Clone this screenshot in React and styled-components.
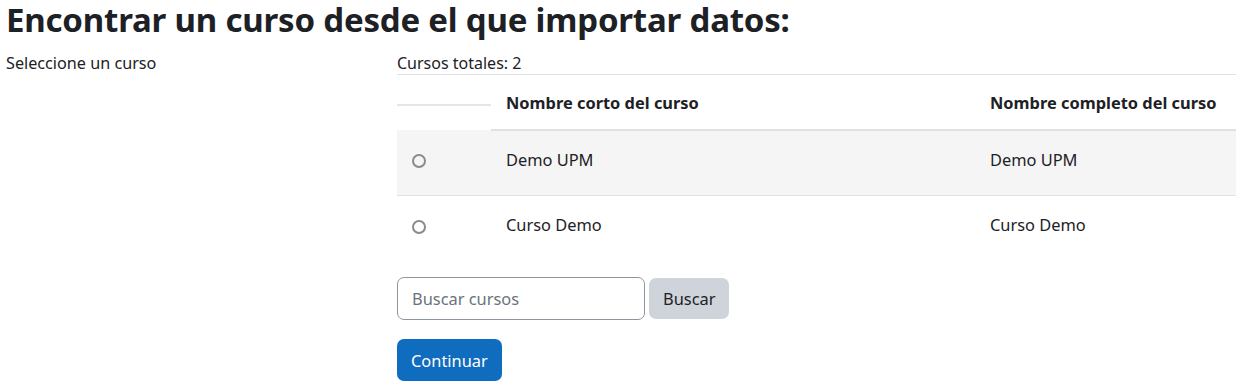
import React from 'react';
import styled, { createGlobalStyle } from 'styled-components';

const GlobalStyle = createGlobalStyle`
  body {
    margin: 0;
    background: #fff;
    color: #1d2125;
    font-family: "Noto Sans", "Open Sans", sans-serif;
    font-size: 16.4px;
  }
`;

const Page = styled.div`
  padding: 0 0 0 6px;
`;

const Heading = styled.h2`
  margin: 0 0 13px;
  font-size: 33px;
  font-weight: 700;
  line-height: 39px;
  letter-spacing: -0.2px;
`;

const FormRow = styled.div`
  display: grid;
  grid-template-columns: 391px 1fr;
`;

const Label = styled.div`
  font-size: 16.2px;
  line-height: 22px;
`;

const Content = styled.div`
  display: flex;
  flex-direction: column;
`;

const Total = styled.div`
  font-size: 16px;
  line-height: 22px;
`;

const Table = styled.table`
  width: 100%;
  border-collapse: collapse;
  border-top: 1px solid #dee2e6;
  font-size: 16.4px;
`;

const Th = styled.th`
  text-align: left;
  font-weight: 700;
  height: 54px;
  padding: 0 15px;
  vertical-align: middle;
  border-bottom: 2px solid #dee2e6;
  width: ${(p) => p.$width || 'auto'};
`;

const BlankTh = styled.th`
  width: 94px;
  padding: 0;
  vertical-align: middle;
  &::after {
    content: '';
    display: block;
    height: 2px;
    margin-top: 4px;
    background: #e3e6e9;
  }
`;

const Tr = styled.tr`
  background: ${(p) => (p.$striped ? '#f5f5f5' : 'transparent')};
  border-bottom: ${(p) => (p.$last ? 'none' : '1px solid #dee2e6')};
`;

const Td = styled.td`
  height: 57px;
  padding: 0 15px 7px;
  vertical-align: middle;
`;

const Radio = styled.span`
  display: inline-block;
  width: 14px;
  height: 14px;
  box-sizing: border-box;
  border: 2px solid #8a8a90;
  border-radius: 50%;
  vertical-align: middle;
`;

const SearchRow = styled.div`
  display: flex;
  align-items: center;
  gap: 4px;
  margin-top: 17px;
`;

const Input = styled.input`
  width: 248px;
  height: 43px;
  box-sizing: border-box;
  border: 1px solid #8f959e;
  border-radius: 7px;
  padding: 0 14px;
  font-family: inherit;
  font-size: 16.4px;
  color: #1d2125;
  &::placeholder {
    color: #6a737b;
  }
`;

const Button = styled.button`
  height: ${(p) => (p.$primary ? '42px' : '41px')};
  padding: 0 14px;
  border: none;
  border-radius: 7px;
  font-family: inherit;
  font-size: 16.4px;
  background: ${(p) => (p.$primary ? '#0f6cbf' : '#ced4da')};
  color: ${(p) => (p.$primary ? '#fff' : '#1d2125')};
`;

const Actions = styled.div`
  margin-top: 19px;
`;

const courses = [
  { short: 'Demo UPM', full: 'Demo UPM' },
  { short: 'Curso Demo', full: 'Curso Demo' },
];

export default function App() {
  return (
    <Page>
      <GlobalStyle />
      <Heading>Encontrar un curso desde el que importar datos:</Heading>
      <FormRow>
        <Label>Seleccione un curso</Label>
        <Content>
          <Total>Cursos totales: 2</Total>
          <Table>
            <thead>
              <tr>
                <BlankTh />
                <Th $width="454px">Nombre corto del curso</Th>
                <Th>Nombre completo del curso</Th>
              </tr>
            </thead>
            <tbody>
              {courses.map((c, i) => (
                <Tr key={c.short} $striped={i === 0} $last={i === courses.length - 1}>
                  <Td>
                    <Radio />
                  </Td>
                  <Td>{c.short}</Td>
                  <Td>{c.full}</Td>
                </Tr>
              ))}
            </tbody>
          </Table>
          <SearchRow>
            <Input placeholder="Buscar cursos" />
            <Button>Buscar</Button>
          </SearchRow>
          <Actions>
            <Button $primary>Continuar</Button>
          </Actions>
        </Content>
      </FormRow>
    </Page>
  );
}
